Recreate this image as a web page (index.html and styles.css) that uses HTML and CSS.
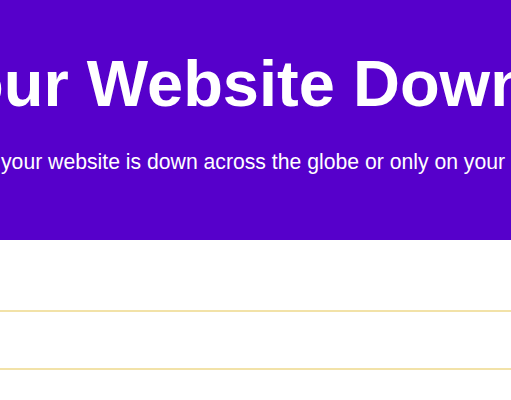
FILE: index.html
```html
<!DOCTYPE html>
<html>
<head>
    <title>Is Your Website Down?</title>
    <link rel="stylesheet" href="styles.css">
</head>
<body>
    <div class="hero">
        <div class="hero-inner">
            <h1>Is Your Website Down?</h1>
            <p class="subtitle">Check whether your website is down across the globe or only on your end.</p>
        </div>
    </div>

    <div class="results">
        <div class="result-row"></div>
        <div class="result-row"></div>
        <div class="result-row"></div>
    </div>
</body>
</html>
```

FILE: styles.css
```css
body {
    margin: 0;
    font-family: "Liberation Sans", Arial, sans-serif;
    background-color: #ffffff;
    overflow: hidden;
}

.hero {
    background-color: #5600cb;
    color: #ffffff;
    padding: 46px 0 66px 0;
}

.hero-inner {
    width: 424px;
    display: flex;
    flex-direction: column;
    align-items: center;
}

.hero h1 {
    margin: 0;
    font-size: 65px;
    font-weight: bold;
    white-space: nowrap;
}

.subtitle {
    margin: 29px 0 0 0;
    padding-right: 18px;
    font-size: 21.2px;
    white-space: nowrap;
}

.results {
    padding-top: 14px;
}

.result-row {
    height: 56px;
    border-bottom: 2px solid #f2e2a8;
}
```
